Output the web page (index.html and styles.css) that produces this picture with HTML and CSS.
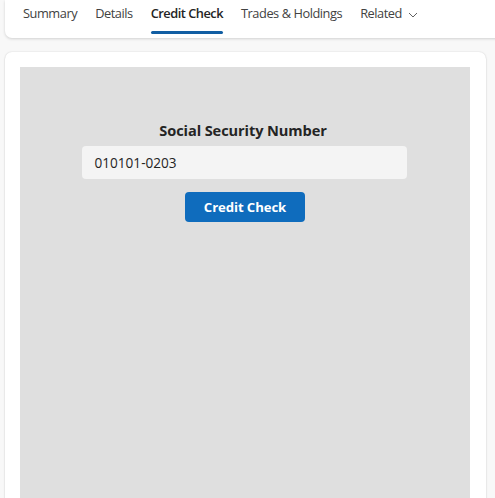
FILE: index.html
```html
<!DOCTYPE html>
<html>
<head>
<meta charset="utf-8">
<link rel="stylesheet" href="styles.css">
</head>
<body>
<div class="page">
  <nav class="tabbar">
    <div class="tab">Summary</div>
    <div class="tab">Details</div>
    <div class="tab active">Credit Check</div>
    <div class="tab">Trades &amp; Holdings</div>
    <div class="tab">Related
      <svg class="chev" width="10" height="10" viewBox="0 0 10 10"><path d="M1 3 L5 7 L9 3" fill="none" stroke="#616161" stroke-width="1"/></svg>
    </div>
  </nav>
  <section class="card">
    <div class="frame">
      <div class="form">
        <label class="label">Social Security Number</label>
        <div class="input">010101-0203</div>
        <button class="btn">Credit Check</button>
      </div>
    </div>
  </section>
</div>
</body>
</html>
```
FILE: styles.css
```css
html, body { margin: 0; padding: 0; }
body {
  background: #f8f8f8;
  font-family: "Open Sans", "Noto Sans", sans-serif;
  color: #242424;
  width: 495px;
  height: 498px;
  overflow: hidden;
}
.page {
  padding: 0 0 0 5px;
  display: flex;
  flex-direction: column;
  gap: 14px;
}
.tabbar {
  background: #fff;
  height: 38px;
  margin-right: -12px;
  border-radius: 0 0 7px 7px;
  box-shadow: 0 1px 3px rgba(0,0,0,0.16);
  display: flex;
  align-items: flex-start;
  padding-left: 9px;
  box-sizing: border-box;
}
.tab {
  position: relative;
  font-size: 12.8px;
  color: #424242;
  padding: 4px 9px 0;
  height: 34px;
  box-sizing: border-box;
  display: flex;
  align-items: flex-start;
  gap: 6px;
  white-space: nowrap;
  letter-spacing: -0.45px;
}
.tab.active {
  font-weight: 600;
  color: #242424;
  letter-spacing: -0.5px;
}
.tab.active::after {
  content: "";
  position: absolute;
  left: 9px;
  right: 9px;
  bottom: 0;
  height: 3px;
  border-radius: 2px;
  background: #115ea3;
}
.chev { margin-top: 6px; }
.card {
  background: #fff;
  width: 481px;
  height: 460px;
  border-radius: 7px;
  box-shadow: 0 0 2px rgba(0,0,0,0.14), 0 1px 2px rgba(0,0,0,0.1);
  padding: 15px 0 0 15px;
  box-sizing: border-box;
}
.frame {
  background: #dfdfdf;
  width: 450px;
  height: 445px;
}
.form {
  display: flex;
  flex-direction: column;
  align-items: center;
  padding-top: 53px;
}
.label {
  font-weight: 700;
  font-size: 14.6px;
  color: #242424;
  height: 26px;
  letter-spacing: -0.1px;
  margin-right: 4px;
}
.input {
  width: 325px;
  height: 33px;
  background: #f4f4f4;
  border-radius: 4px;
  box-sizing: border-box;
  padding: 0 13px;
  display: flex;
  align-items: center;
  font-size: 13.6px;
  color: #242424;
  margin-right: 2px;
}
.btn {
  margin-top: 13px;
  width: 120px;
  height: 30px;
  background: #0f6cbd;
  color: #fff;
  border: none;
  border-radius: 4px;
  font-family: "Open Sans", "Noto Sans", sans-serif;
  font-weight: 700;
  font-size: 13.2px;
  letter-spacing: -0.1px;
  padding: 0;
}
```
